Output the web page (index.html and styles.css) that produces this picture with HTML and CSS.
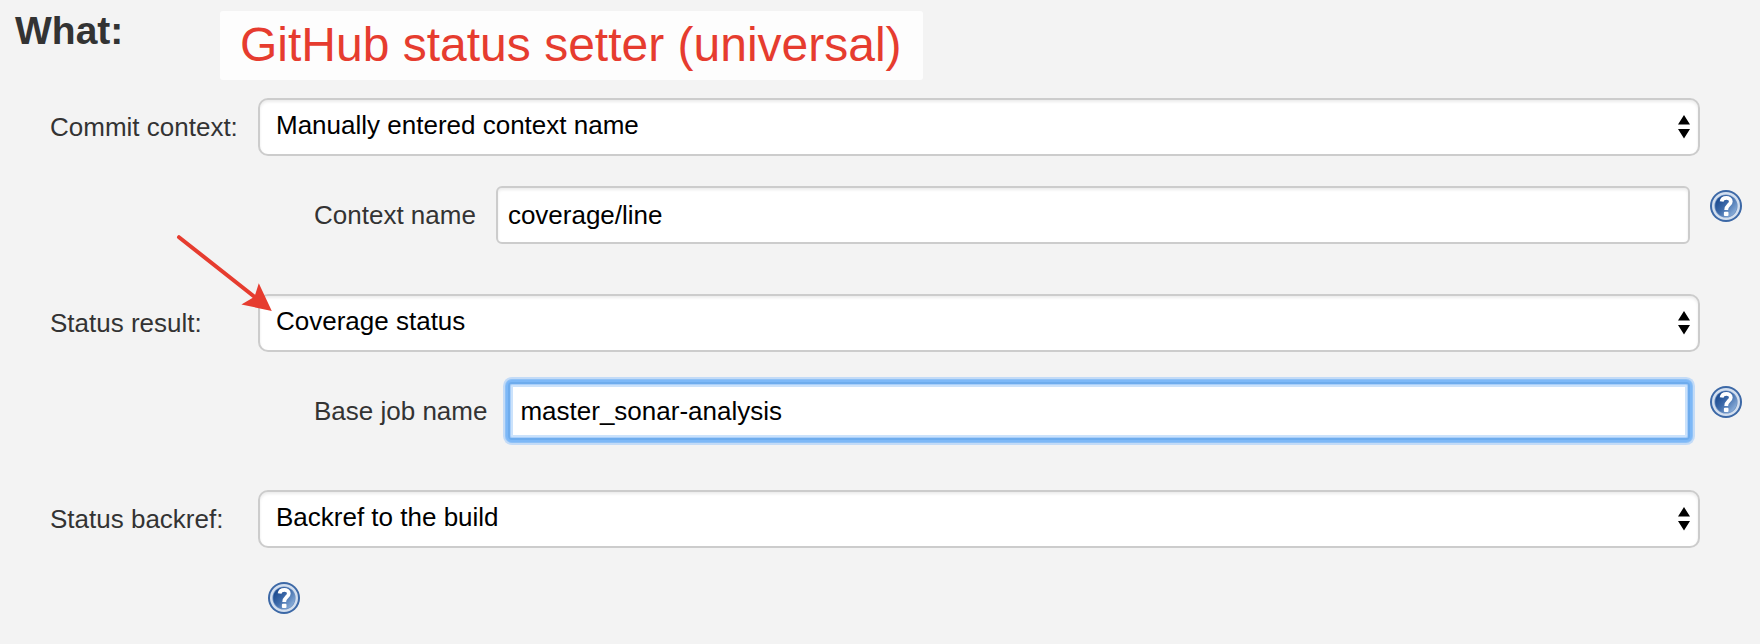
FILE: index.html
```html
<!DOCTYPE html>
<html lang="en">
<head>
<meta charset="utf-8">
<title>GitHub status setter</title>
<link rel="stylesheet" href="styles.css">
</head>
<body>
<svg class="defs" width="0" height="0" aria-hidden="true">
  <defs>
    <linearGradient id="blue" x1="0.1" y1="0.2" x2="0.9" y2="0.9">
      <stop offset="0" stop-color="#1b4a8f"/>
      <stop offset="0.45" stop-color="#3f6cab"/>
      <stop offset="1" stop-color="#8fb2dc"/>
    </linearGradient>
    <symbol id="help" viewBox="0 0 32 32">
      <circle cx="16" cy="16" r="16" fill="#3c68a6"/>
      <circle cx="16" cy="16" r="12.8" fill="#6f93c4" stroke="#d3dfef" stroke-width="2.4"/>
      <circle cx="16" cy="16" r="10.8" fill="url(#blue)"/>
      <path d="M11.6 11.4C12.2 6.8 20.8 6.6 20.8 11.4C20.8 15 16.2 15 16.2 20" fill="none" stroke="#fff" stroke-width="3.8"/>
      <rect x="13.9" y="21.8" width="4.6" height="4.2" rx="1" fill="#fff"/>
    </symbol>
    <symbol id="updown" viewBox="0 0 12 24">
      <path d="M6 0L12 9.6H0ZM6 23.6L12 14H0Z"/>
    </symbol>
  </defs>
</svg>
<main class="form">
  <header class="header">
    <h1 class="heading">What:</h1>
    <div class="caption">GitHub status setter (universal)</div>
  </header>

  <section class="group">
    <div class="row">
      <span class="label">Commit context:</span>
      <div class="select"><span>Manually entered context name</span><svg class="arrows"><use href="#updown"/></svg></div>
    </div>
    <div class="row nested">
      <label class="sublabel" for="context">Context name</label>
      <input class="field" id="context" value="coverage/line">
      <svg class="help"><use href="#help"/></svg>
    </div>
  </section>

  <section class="group">
    <div class="row">
      <span class="label">Status result:</span>
      <div class="select"><span>Coverage status</span><svg class="arrows"><use href="#updown"/></svg></div>
    </div>
    <div class="row nested">
      <label class="sublabel" for="job">Base job name</label>
      <input class="field focused" id="job" value="master_sonar-analysis">
      <svg class="help"><use href="#help"/></svg>
    </div>
  </section>

  <section class="group">
    <div class="row">
      <span class="label">Status backref:</span>
      <div class="select"><span>Backref to the build</span><svg class="arrows"><use href="#updown"/></svg></div>
    </div>
    <svg class="help help-below"><use href="#help"/></svg>
  </section>

  <svg class="pointer" width="100" height="82" viewBox="175 233 100 82">
    <path d="M179 237.2L256 298" stroke="#e63c2f" stroke-width="4" stroke-linecap="round"/>
    <path d="M271.8 311L258.8 283.3L254.5 296.8L241.4 304.5Z" fill="#e63c2f"/>
  </svg>
</main>
</body>
</html>
```
FILE: styles.css
```css
* {
  box-sizing: border-box;
}

body {
  margin: 0;
  background: #f3f3f3;
  color: #333;
  font: 26px/30px "Liberation Sans", Arial, sans-serif;
}

.defs {
  position: absolute;
}

.form {
  position: relative;
  height: 644px;
  overflow: hidden;
}

.header {
  display: flex;
  align-items: flex-start;
  height: 98px;
  padding: 11px 0 0 15px;
}

.heading {
  width: 205px;
  margin: -2px 0 0;
  font-size: 39px;
  line-height: 44px;
}

.caption {
  width: 703px;
  height: 69px;
  padding-left: 20px;
  border-radius: 3px;
  background: #fdfdfd;
  color: #e63c2f;
  font-size: 48px;
  line-height: 67px;
  white-space: nowrap;
}

.group {
  display: flex;
  flex-direction: column;
  gap: 30px;
  height: 196px;
  padding-left: 50px;
}

.row {
  display: flex;
  align-items: center;
  width: 1650px;
  height: 58px;
}

.label {
  width: 208px;
}

.select {
  display: flex;
  flex: 1;
  align-items: center;
  justify-content: space-between;
  height: 58px;
  padding: 0 8px 0 16px;
  border: 2px solid #ccc;
  border-radius: 10px;
  background: #fff;
  box-shadow: inset 0 2px 3px rgba(0, 0, 0, 0.08);
  color: #000;
}

.select span {
  padding-bottom: 4px;
}

.arrows {
  width: 12px;
  height: 24px;
}

.nested {
  width: 1692px;
  padding-left: 264px;
}

.sublabel {
  margin-right: 20px;
  white-space: nowrap;
}

.field {
  flex: 1;
  height: 58px;
  margin-right: 20px;
  padding: 0 10px;
  border: 2px solid #ccc;
  border-radius: 6px;
  outline: 0;
  background: #fff;
  box-shadow: inset 0 2px 3px rgba(0, 0, 0, 0.08);
  color: #000;
  font: inherit;
}

.focused {
  margin-left: 1px;
  border-color: #6eaced;
  border-radius: 4px;
  box-shadow: inset 0 0 0 1px #a9cffa, inset 0 0 0 3px #cbe2fb, 0 0 0 2px #7db8f7, 0 0 0 3px #8fc1f6, 0 0 0 5px #c3dbf7;
}

.help {
  flex: none;
  align-self: flex-start;
  width: 32px;
  height: 32px;
  margin-top: 4px;
}

.help-below {
  margin-left: 218px;
}

.pointer {
  position: absolute;
  left: 175px;
  top: 233px;
}
```
